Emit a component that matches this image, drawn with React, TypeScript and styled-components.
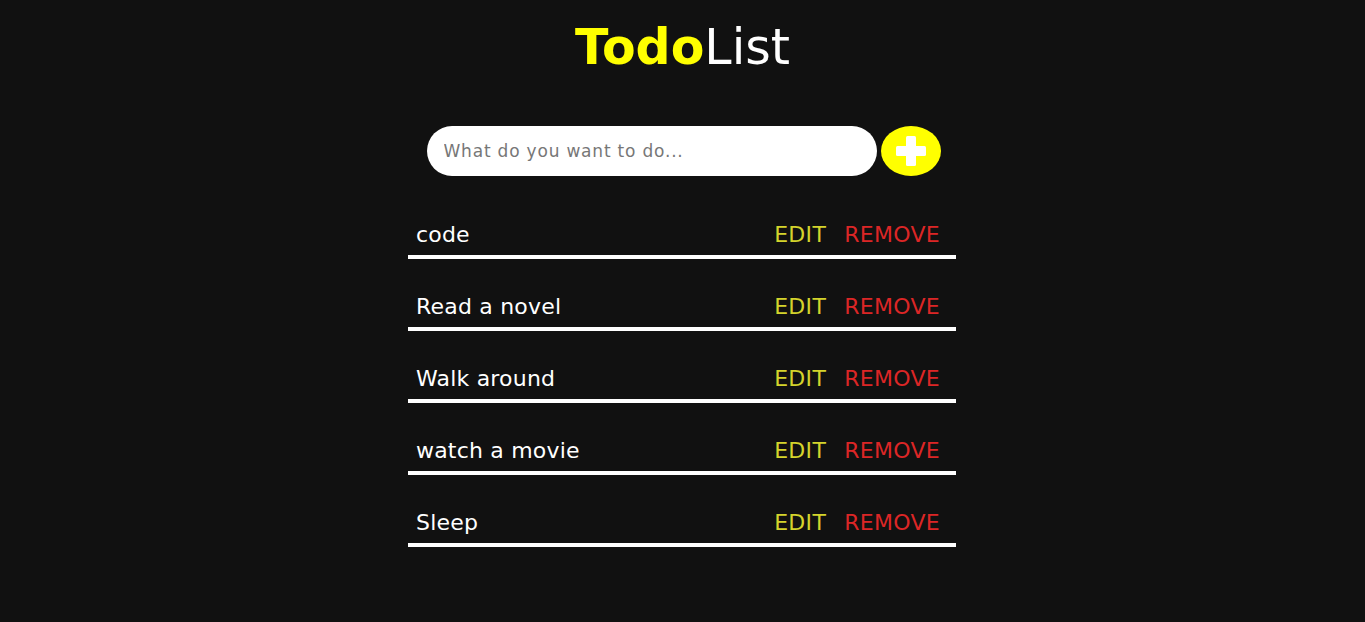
import React, { useState } from "react";
import styled, { createGlobalStyle } from "styled-components";

const Global = createGlobalStyle`
  html, body { margin: 0; padding: 0; background: #111111; }
  body { font-family: "DejaVu Sans", Verdana, sans-serif; color: #fff; }
  * { box-sizing: border-box; }
`;

const Page = styled.div`
  width: 100%;
  min-height: 622px;
  background: #111111;
  display: flex;
  flex-direction: column;
  align-items: center;
  padding-top: 18px;
`;

const Title = styled.h1`
  margin: 0;
  font-size: 49px;
  font-weight: normal;
  line-height: 60px;
  color: #ffffff;
`;

const Accent = styled.span`
  color: #ffff00;
  font-weight: bold;
`;

const Form = styled.form`
  display: flex;
  align-items: center;
  gap: 4px;
  margin-top: 48px;
  margin-left: 2px;
`;

const Input = styled.input`
  width: 450px;
  height: 50px;
  border: none;
  border-radius: 25px;
  background: #fff;
  padding: 0 17px;
  font-family: "DejaVu Sans", Verdana, sans-serif;
  font-size: 17px;
  letter-spacing: 0.8px;
  color: #333;
  outline: none;
  &::placeholder { color: #777; }
`;

const AddButton = styled.button`
  width: 60px;
  height: 50px;
  border: none;
  border-radius: 50%;
  background: #ffff00;
  display: flex;
  align-items: center;
  justify-content: center;
  padding: 0;
  cursor: pointer;
`;

const List = styled.ul`
  list-style: none;
  margin: 31px 1px 0 0;
  padding: 0;
  width: 548px;
  display: flex;
  flex-direction: column;
  gap: 20px;
`;

const Row = styled.li`
  display: flex;
  align-items: center;
  justify-content: space-between;
  height: 52px;
  padding: 6px 16px 0 8px;
  border-bottom: 4px solid #ffffff;
  font-size: 22px;
`;

const Label = styled.span`
  color: #ffffff;
  letter-spacing: 0.2px;
`;

const Actions = styled.div`
  display: flex;
  gap: 18px;
  letter-spacing: 0.3px;
`;

const Action = styled.span<{ $tone: "edit" | "remove" }>`
  color: ${(p) => (p.$tone === "edit" ? "#d4d42c" : "#dc2626")};
  cursor: pointer;
`;

const PlusIcon = () => (
  <svg width="32" height="32" viewBox="0 0 32 32">
    <rect x="11" y="1" width="10" height="30" rx="1.5" fill="#fff" />
    <rect x="1" y="11" width="30" height="10" rx="1.5" fill="#fff" />
  </svg>
);

export default function App() {
  const [items] = useState(["code", "Read a novel", "Walk around", "watch a movie", "Sleep"]);
  return (
    <>
      <Global />
      <Page>
        <Title>
          <Accent>Todo</Accent>List
        </Title>
        <Form onSubmit={(e) => e.preventDefault()}>
          <Input placeholder="What do you want to do..." />
          <AddButton type="submit">
            <PlusIcon />
          </AddButton>
        </Form>
        <List>
          {items.map((t) => (
            <Row key={t}>
              <Label>{t}</Label>
              <Actions>
                <Action $tone="edit">EDIT</Action>
                <Action $tone="remove">REMOVE</Action>
              </Actions>
            </Row>
          ))}
        </List>
      </Page>
    </>
  );
}
